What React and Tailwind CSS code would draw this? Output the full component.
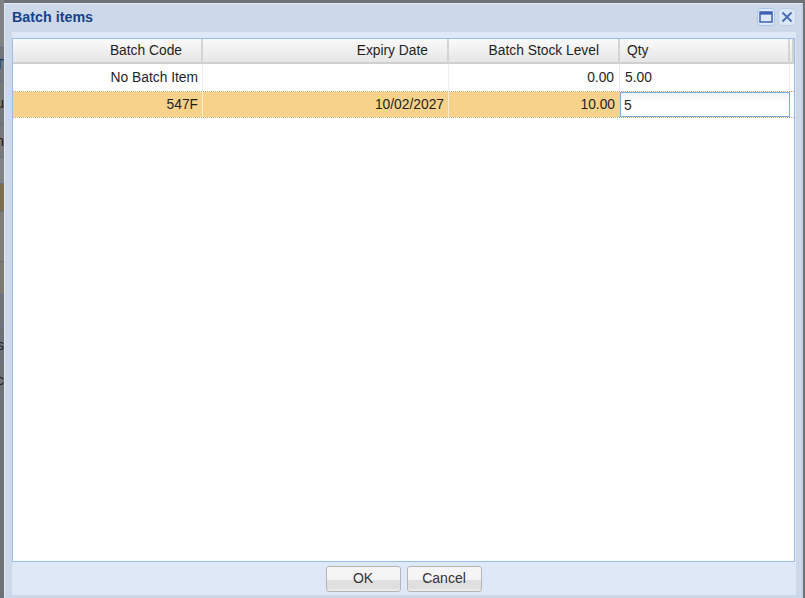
const font = { fontFamily: '"Liberation Sans", Arial, sans-serif' };

const columns = 'grid grid-cols-[190px_246px_171px_170px_1fr]';

// the page behind the dialog, showing as a strip on the left
const backdropBands = [
  { h: 'h-[48px]', bg: 'bg-[#7f8184]' },
  { h: 'h-[33px]', bg: 'bg-[#72767c]', glyph: 'T', color: 'text-[#123a6b]' },
  { h: 'h-[44px]', bg: 'bg-[#74777a]', glyph: 'u', color: 'text-[#2a2410]' },
  { h: 'h-[33px]', bg: 'bg-[#76787b]', glyph: 'n', color: 'text-[#301010]' },
  { h: 'h-[26px]', bg: 'bg-[#808285]' },
  { h: 'h-[28px]', bg: 'bg-[#7d6f4d]' },
  { h: 'h-[50px]', bg: 'bg-[#7f7e76]' },
  { h: 'h-[33px]', bg: 'bg-[#7b7a6e]' },
  { h: 'h-[33px]', bg: 'bg-[#6f747b]' },
  { h: 'h-[34px]', bg: 'bg-[#6d7177]', glyph: 's', color: 'text-[#20242a]' },
  { h: 'h-[36px]', bg: 'bg-[#6f7277]', glyph: 'c', color: 'text-[#20242a]' },
  { h: 'h-[200px]', bg: 'bg-[#6e7176]' },
];

function BackdropBand({ h, bg, glyph, color }) {
  return (
    <div className={`${h} ${bg} border-b border-[#5f7088] flex items-center justify-end overflow-hidden`}>
      {glyph && <span className={`text-[14px] leading-none ${color}`}>{glyph}</span>}
    </div>
  );
}

function HeaderCell({ children, className = '' }) {
  return (
    <div className={`h-[25px] pt-[1px] flex items-center border-r-2 border-r-[#d4d4d4] border-b-2 border-b-[#d0d0d0] bg-gradient-to-b from-[#fafafa] to-[#e6e6e6] ${className}`}>
      {children}
    </div>
  );
}

function Cell({ children, className = '' }) {
  return (
    <div className={`pt-[1px] flex items-center justify-end border-r border-r-[#ededed] ${className}`}>
      {children}
    </div>
  );
}

function FooterButton({ children }) {
  return (
    <button className="w-[75px] h-[26px] pb-[2px] rounded-[3px] border border-[#b5b5b5] bg-[linear-gradient(#f6f6f6_0%,#f3f3f3_55%,#dfdfdf_56%,#dfdfdf_88%,#f0f0f0_100%)] text-[14px] text-[#333]">
      {children}
    </button>
  );
}

export default function App() {
  return (
    <div style={font} className="w-[805px] h-[598px] flex overflow-hidden bg-[#6e7176] text-[13.8px] text-[#1f1f1f]">
      <div className="w-[4px] flex flex-col shrink-0">
        {backdropBands.map((band, i) => (
          <BackdropBand key={i} {...band} />
        ))}
      </div>

      <div className="w-[799px] mt-[3px] flex flex-col bg-[#cdd9e8] border-t border-l border-[#e0e8f3] border-r-2 border-r-[#c3d1e3]">
        <div className="h-[28px] flex items-center justify-between pl-[7px] pr-[5px] shrink-0">
          <span className="text-[14.3px] font-bold text-[#15428b]">Batch items</span>
          <div className="flex gap-[3px] mt-[-2px]">
            <button className="w-[18px] h-[18px] rounded-[4px] border border-[#a9c4e6] bg-[#e0ebf8] flex items-center justify-center">
              <svg width="14" height="12" viewBox="0 0 14 12">
                <rect x="1" y="1" width="12" height="10" fill="#dfe9f6" stroke="#3f5fb0" strokeWidth="1.5" />
                <rect x="1" y="1" width="12" height="2.6" fill="#3f5fb0" />
              </svg>
            </button>
            <button className="w-[18px] h-[18px] rounded-[4px] border border-[#bcd0ea] bg-[#dbe6f5] flex items-center justify-center">
              <svg width="12" height="12" viewBox="0 0 12 12">
                <path d="M1.5 1.5 L10.5 10.5 M10.5 1.5 L1.5 10.5" stroke="#4a6fb5" strokeWidth="2" />
              </svg>
            </button>
          </div>
        </div>

        <div className="flex flex-1 min-h-0 pl-[7px] pr-[5px] pb-[3px]">
          <div className="w-[785px] flex flex-col pt-[6px] bg-[#dfe8f6] pr-[1px]">
            <div className="flex-1 flex flex-col bg-white border border-[#99bce8] min-h-0">
              <div className={columns}>
                <HeaderCell className="justify-end pr-[19px]">Batch Code</HeaderCell>
                <HeaderCell className="justify-end pr-[19px]">Expiry Date</HeaderCell>
                <HeaderCell className="justify-end pr-[19px]">Batch Stock Level</HeaderCell>
                <HeaderCell className="pl-[7px]">Qty</HeaderCell>
                <HeaderCell className="border-r-0" />
              </div>

              <div className={`${columns} h-[27px]`}>
                <Cell className="pr-[4px]">No Batch Item</Cell>
                <Cell className="pr-[4px]" />
                <Cell className="pr-[5px]">0.00</Cell>
                <Cell className="justify-start pl-[5px]">5.00</Cell>
                <div />
              </div>

              <div className={`${columns} h-[27px] border-y border-dotted border-[#c9a86a]`}>
                <Cell className="pr-[4px] bg-[#f7d28a] border-r-[#fbeed2]">547F</Cell>
                <Cell className="pr-[4px] bg-[#f7d28a] border-r-[#fbeed2]">10/02/2027</Cell>
                <Cell className="pr-[5px] bg-[#f7d28a] border-r-0">10.00</Cell>
                <input
                  readOnly
                  value="5"
                  className="h-[25px] w-[170px] pl-[3px] pt-[1px] bg-gradient-to-b from-[#eef2f5] to-white to-40% border border-[#7eaadd] outline-none text-[13.8px] text-[#1f1f1f]"
                />
                <div />
              </div>
            </div>

            <div className="h-[33px] shrink-0 flex items-center justify-center gap-[6px] pt-[1px]">
              <FooterButton>OK</FooterButton>
              <FooterButton>Cancel</FooterButton>
            </div>
          </div>
        </div>
      </div>

      <div className="flex-1 bg-[#6e7176]" />
    </div>
  );
}
